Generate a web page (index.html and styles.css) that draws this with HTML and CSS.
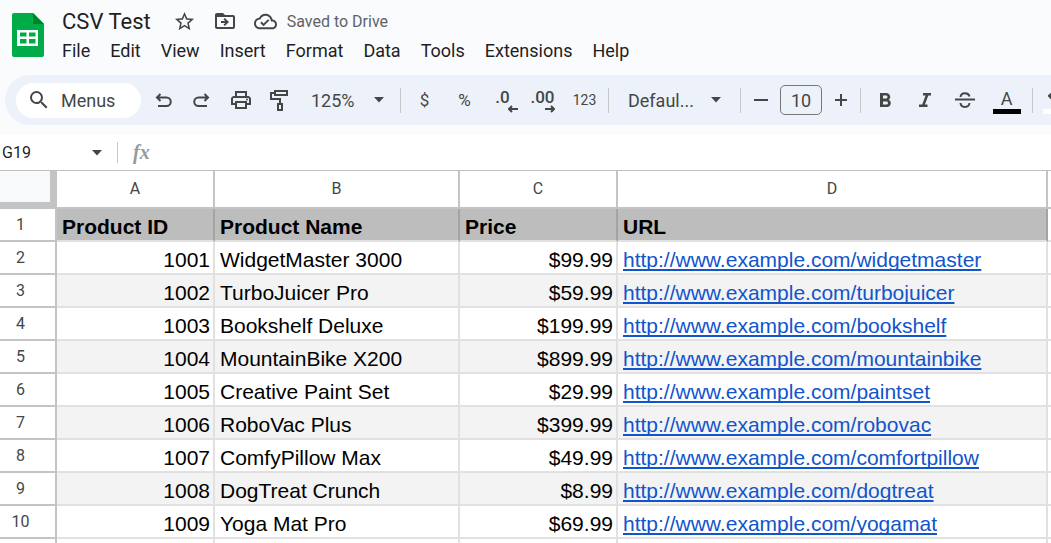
FILE: index.html
```html
<!DOCTYPE html>
<html lang="en">
<head>
	<meta charset="utf-8">
	<title>CSV Test</title>
	<link rel="stylesheet" href="styles.css">
</head>
<body>
	<header class="header">
		<svg class="logo" width="32" height="44" viewBox="0 0 32 44">
			<path fill="#00ac47" d="M2 0h19l11 11v31a2 2 0 0 1-2 2H2a2 2 0 0 1-2-2V2a2 2 0 0 1 2-2z"/>
			<path fill="#00832d" d="M21 0l11 11H21z"/>
			<path fill="#fff" fill-rule="evenodd" d="M5 17h21v16H5zM8 19.500v4h6.500v-4zm9 0v4h6.500v-4zM8 26v4.500h6.500V26zm9 0v4.500h6.500V26z"/>
		</svg>
		<div class="header_main">
			<div class="title_row">
				<h1 class="title">CSV Test</h1>
				<button class="icon_button" aria-label="Star">
					<svg width="23" height="23" viewBox="0 0 24 24"><path d="M22 9.240l-7.190-.62L12 2 9.190 8.630 2 9.240l5.460 4.730L5.820 21 12 17.270 18.180 21l-1.630-7.030L22 9.240zM12 15.400l-3.760 2.270 1-4.280-3.320-2.880 4.380-.38L12 6.100l1.710 4.040 4.380.38-3.320 2.880 1 4.280L12 15.400z"/></svg>
				</button>
				<button class="icon_button" aria-label="Move">
					<svg width="24" height="24" viewBox="0 0 24 24"><path d="M20 6h-8l-2-2H4c-1.100 0-2 .9-2 2v12c0 1.100.9 2 2 2h16c1.100 0 2-.9 2-2V8c0-1.100-.9-2-2-2zm0 12H4V8h16v10zm-8.200-1l4.200-4-4.200-4-1.300 1.300 1.700 1.800H8v1.800h4.200l-1.700 1.800z"/></svg>
				</button>
				<button class="icon_button" aria-label="Document status">
					<svg width="23" height="23" viewBox="0 0 24 24"><path d="M19.350 10.040C18.670 6.590 15.640 4 12 4 9.110 4 6.600 5.640 5.350 8.040 2.340 8.360 0 10.910 0 14c0 3.310 2.690 6 6 6h13c2.760 0 5-2.240 5-5 0-2.640-2.050-4.780-4.650-4.960zM19 18H6c-2.210 0-4-1.790-4-4 0-2.050 1.530-3.760 3.560-3.970l1.070-.11.5-.95C8.080 7.140 9.940 6 12 6c2.620 0 4.880 1.860 5.390 4.430l.3 1.500 1.530.11c1.560.1 2.780 1.410 2.780 2.960 0 1.650-1.350 3-3 3zm-9-3.820l-2.090-2.090L6.500 13.500 10 17l6.010-6.010-1.410-1.410z"/></svg>
				</button>
				<span class="saved">Saved to Drive</span>
			</div>
			<nav class="menu">
				<button>File</button>
				<button>Edit</button>
				<button>View</button>
				<button>Insert</button>
				<button>Format</button>
				<button>Data</button>
				<button>Tools</button>
				<button>Extensions</button>
				<button>Help</button>
			</nav>
		</div>
	</header>

	<div class="toolbar">
		<button class="search">
			<svg width="24" height="24" viewBox="0 0 24 24"><path d="M15.500 14h-.79l-.28-.27A6.470 6.470 0 0 0 16 9.500 6.500 6.500 0 1 0 9.500 16c1.610 0 3.090-.59 4.230-1.570l.27.28v.79l5 4.990L20.490 19l-4.990-5zm-6 0C7.010 14 5 11.990 5 9.500S7.010 5 9.500 5 14 7.010 14 9.500 11.990 14 9.500 14z"/></svg>
			Menus
		</button>
		<button class="tool" aria-label="Undo">
			<svg class="stroke" width="22" height="22" viewBox="0 0 22 22"><path d="M8.500 5L5 8.500 8.500 12M5 8.500h9.500a4 4 0 0 1 0 8.500H6"/></svg>
		</button>
		<button class="tool" aria-label="Redo">
			<svg class="stroke" width="22" height="22" viewBox="0 0 22 22"><path d="M13.500 5L17 8.500 13.500 12M17 8.500H7.500a4 4 0 0 0 0 8.500H16"/></svg>
		</button>
		<button class="tool" aria-label="Print">
			<svg width="24" height="24" viewBox="0 0 24 24"><path d="M19 8h-1V3H6v5H5c-1.660 0-3 1.340-3 3v6h4v4h12v-4h4v-6c0-1.660-1.340-3-3-3zM8 5h8v3H8V5zm8 14H8v-4h8v4zm2-4v-2H6v2H4v-4c0-.55.45-1 1-1h14c.55 0 1 .45 1 1v4h-2z"/><circle cx="18" cy="11.500" r="1"/></svg>
		</button>
		<button class="tool" aria-label="Paint format">
			<svg class="stroke" width="22" height="24" viewBox="0 0 22 24"><path d="M6 3h12v4H6zM6 5H2v6h9v5M9 16h4v6H9z"/></svg>
		</button>
		<span class="dropdown zoom">
			<select aria-label="Zoom"><option>125%</option></select>
			<svg width="10" height="6" viewBox="0 0 10 6"><path d="M0 0h10L5 5.500z"/></svg>
		</span>
		<span class="line"></span>
		<button class="tool wide sign">$</button>
		<button class="tool wide sign">%</button>
		<button class="tool wide" aria-label="Decrease decimal places">
			<span class="decimal">.0<svg class="stroke" width="10" height="8" viewBox="0 0 10 8"><path d="M10 4H1M4 1L1 4l3 3"/></svg></span>
		</button>
		<button class="tool wide" aria-label="Increase decimal places">
			<span class="decimal more">.00<svg class="stroke" width="10" height="8" viewBox="0 0 10 8"><path d="M0 4h9M6 1l3 3-3 3"/></svg></span>
		</button>
		<button class="tool wide small">123</button>
		<span class="line"></span>
		<span class="dropdown font">
			<select aria-label="Font"><option>Defaul...</option></select>
			<svg width="10" height="6" viewBox="0 0 10 6"><path d="M0 0h10L5 5.500z"/></svg>
		</span>
		<span class="line"></span>
		<button class="tool step" aria-label="Decrease font size">
			<svg class="stroke" width="14" height="14" viewBox="0 0 14 14"><path d="M0 7h14"/></svg>
		</button>
		<input class="size" aria-label="Font size" value="10">
		<button class="tool step" aria-label="Increase font size">
			<svg class="stroke" width="14" height="14" viewBox="0 0 14 14"><path d="M1 7h12M7 1v12"/></svg>
		</button>
		<span class="line"></span>
		<button class="tool wide" aria-label="Bold">
			<svg width="24" height="24" viewBox="0 0 24 24"><path d="M15.600 11.790c.97-.67 1.650-1.770 1.650-2.790 0-2.260-1.750-4-4-4H7v14h7.040c2.090 0 3.710-1.700 3.710-3.790 0-1.520-.86-2.820-2.150-3.420zM10 7.500h3c.83 0 1.500.67 1.500 1.500s-.67 1.500-1.500 1.500h-3v-3zm3.500 9H10v-3h3.500c.83 0 1.500.67 1.500 1.500s-.67 1.500-1.500 1.500z"/></svg>
		</button>
		<button class="tool wide" aria-label="Italic">
			<svg width="24" height="24" viewBox="0 0 24 24"><path d="M10 5v2.500h2.600L9.200 16.500H6V19h8.500v-2.500h-2.600l3.400-9H18V5z"/></svg>
		</button>
		<button class="tool wide" aria-label="Strikethrough">
			<svg class="stroke" width="22" height="22" viewBox="0 0 22 22"><path d="M1 10.500h20M6.500 8C7 3 14.500 3 15.500 7.500M6.500 14c.5 5.500 8.500 5 9 0"/></svg>
		</button>
		<button class="tool color" aria-label="Text color">
			<span class="letter">A</span>
		</button>
		<span class="line"></span>
		<button class="tool wide fill" aria-label="Fill color">
			<svg width="28" height="28" viewBox="0 0 28 28"><path d="M18.560 9.940L9.620 1 8.210 2.410l2.380 2.380-7.150 6.150a1.490 1.490 0 0 0 0 2.120l6.500 6.500c.29.29.68.44 1.060.44s.77-.15 1.060-.44l6.500-7.500c.59-.58.59-1.530 0-2.120zM6.210 12L12 6.210 16.790 11z"/></svg>
		</button>
	</div>

	<div class="formula">
		<input class="name_box" aria-label="Name box" value="G19">
		<svg width="10" height="6" viewBox="0 0 10 6"><path d="M0 0h10L5 5.500z"/></svg>
		<span class="line"></span>
		<label class="fx" for="formula">fx</label>
		<input class="formula_input" id="formula">
	</div>

	<div class="sheet">
		<table>
			<colgroup>
				<col class="col_row"><col class="col_a"><col class="col_b"><col class="col_c"><col class="col_d"><col>
			</colgroup>
			<thead>
				<tr><td class="corner"></td><th>A</th><th>B</th><th>C</th><th>D</th><th></th></tr>
			</thead>
			<tbody>
				<tr class="names"><th>1</th><td>Product ID</td><td>Product Name</td><td>Price</td><td>URL</td><td></td></tr>
				<tr><th>2</th><td class="num">1001</td><td>WidgetMaster 3000</td><td class="num">$99.99</td><td><a href="http://www.example.com/widgetmaster">http://www.example.com/widgetmaster</a></td><td></td></tr>
				<tr class="band"><th>3</th><td class="num">1002</td><td>TurboJuicer Pro</td><td class="num">$59.99</td><td><a href="http://www.example.com/turbojuicer">http://www.example.com/turbojuicer</a></td><td></td></tr>
				<tr><th>4</th><td class="num">1003</td><td>Bookshelf Deluxe</td><td class="num">$199.99</td><td><a href="http://www.example.com/bookshelf">http://www.example.com/bookshelf</a></td><td></td></tr>
				<tr class="band"><th>5</th><td class="num">1004</td><td>MountainBike X200</td><td class="num">$899.99</td><td><a href="http://www.example.com/mountainbike">http://www.example.com/mountainbike</a></td><td></td></tr>
				<tr><th>6</th><td class="num">1005</td><td>Creative Paint Set</td><td class="num">$29.99</td><td><a href="http://www.example.com/paintset">http://www.example.com/paintset</a></td><td></td></tr>
				<tr class="band"><th>7</th><td class="num">1006</td><td>RoboVac Plus</td><td class="num">$399.99</td><td><a href="http://www.example.com/robovac">http://www.example.com/robovac</a></td><td></td></tr>
				<tr><th>8</th><td class="num">1007</td><td>ComfyPillow Max</td><td class="num">$49.99</td><td><a href="http://www.example.com/comfortpillow">http://www.example.com/comfortpillow</a></td><td></td></tr>
				<tr class="band"><th>9</th><td class="num">1008</td><td>DogTreat Crunch</td><td class="num">$8.99</td><td><a href="http://www.example.com/dogtreat">http://www.example.com/dogtreat</a></td><td></td></tr>
				<tr><th>10</th><td class="num">1009</td><td>Yoga Mat Pro</td><td class="num">$69.99</td><td><a href="http://www.example.com/yogamat">http://www.example.com/yogamat</a></td><td></td></tr>
				<tr><th></th><td></td><td></td><td></td><td></td><td></td></tr>
			</tbody>
		</table>
	</div>
</body>
</html>
```

FILE: styles.css
```css
*
{
	box-sizing: border-box;
}
body
{
	margin: 0;
	height: 100vh;
	display: flex;
	flex-direction: column;
	overflow: hidden;
	background: #f9fbfd;
	font-family: Roboto, sans-serif;
	color: #1f1f1f;
}
button, input, select
{
	margin: 0;
	padding: 0;
	border: 0;
	background: none;
	font: inherit;
	color: inherit;
}
svg
{
	display: block;
	fill: #444746;
}
.stroke
{
	fill: none;
	stroke: #444746;
	stroke-width: 2;
}

/* title and menus */
.header
{
	flex: none;
	display: flex;
	height: 75px;
	padding-left: 12px;
}
.logo
{
	margin-top: 13px;
}
.header_main
{
	margin-left: 18px;
}
.title_row
{
	display: flex;
	align-items: center;
	height: 36px;
	padding-top: 6px;
}
.title
{
	margin: 0 22px 0 0;
	font-size: 22px;
	font-weight: 400;
}
.icon_button
{
	margin-right: 17px;
}
.saved
{
	margin-left: -7px;
	font-size: 16px;
	color: #5f6368;
}
.menu
{
	display: flex;
	gap: 20px;
	margin-top: 4px;
	font-size: 18px;
	line-height: 22px;
}

/* toolbar */
.toolbar
{
	flex: none;
	display: flex;
	align-items: center;
	gap: 1px;
	height: 50px;
	margin-left: 5px;
	padding-left: 11px;
	border-radius: 25px 0 0 25px;
	background: #edf2fa;
	overflow: hidden;
	color: #444746;
	font-size: 18px;
}
.toolbar > *
{
	flex: none;
}
.search
{
	display: flex;
	align-items: center;
	gap: 10px;
	width: 125px;
	height: 35px;
	margin-right: 2px;
	padding-left: 11px;
	border-radius: 18px;
	background: #fff;
}
.tool
{
	display: flex;
	align-items: center;
	justify-content: center;
	width: 38px;
	height: 36px;
}
.wide
{
	width: 39px;
}
.small
{
	font-size: 14px;
}
.sign
{
	font-size: 17px;
}
.step
{
	width: 31px;
}
.line
{
	width: 1px;
	height: 25px;
	margin: 0 3px;
	background: #c7c7c7;
}
.dropdown
{
	display: flex;
	align-items: center;
}
.dropdown select
{
	appearance: none;
	width: 100%;
	height: 36px;
}
.dropdown svg
{
	flex: none;
	margin-right: 12px;
}
.zoom
{
	width: 96px;
	padding-left: 11px;
}
.font
{
	width: 123px;
	padding-left: 15px;
}
.font svg
{
	margin-right: 15px;
}
.decimal
{
	position: relative;
	height: 24px;
	margin-right: 4px;
	font-size: 17px;
	font-weight: 500;
	line-height: 18px;
}
.decimal svg
{
	position: absolute;
	right: -8px;
	bottom: -1px;
}
.more svg
{
	right: 0;
}
.size
{
	width: 42px;
	height: 30px;
	margin: 0 2px 0 3px;
	border: 1px solid #747775;
	border-radius: 5px;
	text-align: center;
}
.color
{
	width: 43px;
}
.letter
{
	width: 28px;
	height: 24px;
	margin-top: 3px;
	border-bottom: 5px solid #000;
	line-height: 18px;
}
.fill svg
{
	border-bottom: 5px solid #fff;
}

/* name box and formula */
.formula
{
	flex: none;
	display: flex;
	align-items: center;
	height: 36px;
	margin-top: 10px;
	border-bottom: 1px solid #c0c0c0;
	background: #fff;
}
.name_box
{
	width: 92px;
	padding-left: 2px;
	font-size: 16px;
}
.formula .line
{
	height: 21px;
	margin: 0 15px;
}
.fx
{
	font-family: "Liberation Serif", serif;
	font-size: 20px;
	font-style: italic;
	font-weight: 700;
	color: #999;
}
.formula_input
{
	flex: 1;
	margin-left: 8px;
}

/* grid */
.sheet
{
	flex: 1;
	min-height: 0;
	overflow: hidden;
	background: #fff;
}
table
{
	width: 100%;
	min-width: 1051px;
	table-layout: fixed;
	border-spacing: 0;
	font-family: "Liberation Sans", Arial, sans-serif;
	font-size: 21px;
	line-height: 24px;
	color: #000;
}
.col_row { width: 57px; }
.col_a, .col_c { width: 158px; }
.col_b { width: 245px; }
.col_d { width: 430px; }
th, td
{
	height: 33px;
	padding: 6px 3px 1px 5px;
	border: 0 solid #e1e1e1;
	border-width: 0 2px 2px 0;
	text-align: left;
	white-space: nowrap;
}
th
{
	padding: 0;
	border-color: #c4c4c4;
	font-family: Roboto, sans-serif;
	font-size: 16px;
	font-weight: 400;
	text-align: center;
	color: #444746;
}
thead th
{
	height: 38px;
}
tbody th
{
	padding-right: 14px;
}
.corner
{
	border: 7px solid #c4c4c4;
	border-width: 0 7px 7px 0;
	background: #f8f9fa;
}
.num
{
	text-align: right;
}
.names td
{
	border-right-color: #a4a4a4;
	background: #bdbdbd;
	font-weight: 700;
}
.band td
{
	background: #f3f3f3;
}
tbody td:last-child
{
	background: #fff;
}
tr > :last-child
{
	padding: 0;
	border-right: 0;
}
a
{
	color: #1155cc;
	text-decoration-thickness: 2px;
	text-underline-offset: 2px;
	text-decoration-skip-ink: none;
}
```
